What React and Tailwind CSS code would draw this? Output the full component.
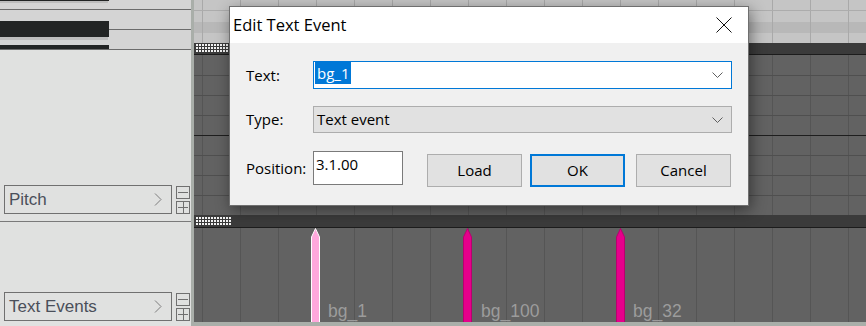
const VGRID_LIGHT =
  "bg-[repeating-linear-gradient(90deg,transparent_0_8px,#a9a9a9_8px_9px,transparent_9px_38px)]";
const VGRID_DARK =
  "bg-[repeating-linear-gradient(90deg,transparent_0_8px,#555555_8px_9px,transparent_9px_38px)]";

function Piano() {
  return (
    <svg width="191" height="50" className="block shrink-0">
      <rect width="191" height="50" fill="#d4d4d4" />
      <rect x="0" y="9" width="191" height="1" fill="#6b6b6b" />
      <rect x="109" y="29" width="82" height="1" fill="#6b6b6b" />
      <rect x="0" y="49" width="191" height="1" fill="#6b6b6b" />
      <rect x="0" y="1" width="108" height="2" fill="#bdbdbd" />
      <rect x="0" y="0" width="109" height="1" fill="#222424" />
      <rect x="0" y="37" width="108" height="3" fill="#bdbdbd" />
      <rect x="0" y="21" width="109" height="16" fill="#222424" />
      <rect x="0" y="45" width="109" height="4" fill="#222424" />
    </svg>
  );
}

function LaneControl({ label }) {
  return (
    <div className="flex items-start pl-[4px] gap-[4px]">
      <div className="w-[168px] h-[29px] border border-[#707070] flex items-center justify-between pl-[4px] pr-[9px]">
        <span className="text-[17px] leading-none text-[#4a4f5a]">{label}</span>
        <svg width="8" height="13" className="block">
          <polyline points="1,0.5 7,6.5 1,12.5" fill="none" stroke="#7d7d7d" strokeWidth="1" />
        </svg>
      </div>
      <div className="flex flex-col gap-[2px] mt-[1px]">
        <div className="w-[14px] h-[13px] border border-[#707070] relative">
          <svg width="12" height="11" className="block">
            <rect x="1" y="5" width="10" height="1" fill="#707070" />
          </svg>
        </div>
        <div className="w-[14px] h-[13px] border border-[#707070]">
          <svg width="12" height="11" className="block">
            <rect x="1" y="5" width="10" height="1" fill="#707070" />
            <rect x="6" y="0" width="1" height="11" fill="#707070" />
          </svg>
        </div>
      </div>
    </div>
  );
}

function LeftPanel() {
  return (
    <div className="w-[191px] shrink-0 flex flex-col bg-[#e0e1e0]">
      <Piano />
      <div className="h-[172px] border-b border-[#7a7a7a] flex flex-col justify-end pb-[7px]">
        <LaneControl label="Pitch" />
      </div>
      <div className="flex-1 flex flex-col justify-end pb-[5px]">
        <LaneControl label="Text Events" />
      </div>
    </div>
  );
}

function Grip() {
  const cols = Array.from({ length: 12 }, (_, i) => i);
  const rows = [0, 1, 2];
  return (
    <svg width="36" height="9" className="block">
      {rows.map((r) =>
        cols.map((c) => (
          <rect key={`${r}-${c}`} x={c * 3} y={r * 3} width="2" height="2" fill="#f2f2f2" />
        ))
      )}
    </svg>
  );
}

function Marker({ left, light }) {
  return (
    <svg width="11" height="96" className={`absolute top-0 block`} style={{ left }}>
      <polygon
        points="1.5,9 5.5,0.5 9.5,9 9.5,96 1.5,96"
        fill={light ? "#ffa8dc" : "#e6008b"}
        stroke={light ? "#ffffff" : "#b8006f"}
        strokeWidth="1"
      />
    </svg>
  );
}

function Canvas() {
  const rows = [0, 1, 2, 3, 4, 5, 6, 7];
  return (
    <div className="flex-1 flex flex-col min-w-0">
      <div className="h-[43px] flex flex-col">
        <div className={`h-[10px] bg-[#c5c5c5] ${VGRID_LIGHT}`} />
        <div className="h-[1px] bg-[#acacac]" />
        <div className={`h-[11px] bg-[#c5c5c5] ${VGRID_LIGHT}`} />
        <div className={`h-[11px] bg-[#b8b8b8] ${VGRID_LIGHT}`} />
        <div className={`h-[10px] bg-[#c5c5c5] ${VGRID_LIGHT}`} />
      </div>
      <div className="h-[12px] bg-[#3b3b3b] border-b border-[#1c1c1c] pl-[2px] pt-[1px]">
        <Grip />
      </div>
      <div className={`h-[160px] flex flex-col bg-[#626262] ${VGRID_DARK}`}>
        {rows.map((r) => (
          <div
            key={r}
            className={
              r === 0
                ? "h-[20px]"
                : r === 4
                ? "h-[20px] border-t border-[#1e1e1e]"
                : "h-[20px] border-t border-[#4f4f4f]"
            }
          />
        ))}
      </div>
      <div className="h-[13px] bg-[#3b3b3b] border-b border-[#1c1c1c] pl-[2px] pt-[2px]">
        <Grip />
      </div>
      <div className={`h-[94px] relative overflow-hidden bg-[#626262] ${VGRID_DARK}`}>
        <Marker left={116} light />
        <Marker left={268} />
        <Marker left={421} />
        <span className="absolute left-[134px] top-[75px] text-[17.5px] leading-[17px] text-[#9c9c9c]">bg_1</span>
        <span className="absolute left-[287px] top-[75px] text-[17.5px] leading-[17px] text-[#9c9c9c]">bg_100</span>
        <span className="absolute left-[439px] top-[75px] text-[17.5px] leading-[17px] text-[#9c9c9c]">bg_32</span>
      </div>
      <div className="flex-1 bg-[#a9aea9]" />
    </div>
  );
}

function Chevron() {
  return (
    <svg width="11" height="6" className="block">
      <polyline points="0.5,0.5 5.5,5.5 10.5,0.5" fill="none" stroke="#5f5f5f" strokeWidth="1" />
    </svg>
  );
}

function Dialog() {
  return (
    <div className="absolute left-[229px] top-[6px] w-[520px] h-[200px] border border-[#6f6f6f] bg-[#f0f0f0] shadow-[2px_4px_14px_rgba(0,0,0,0.45)] flex flex-col font-['Open_Sans',sans-serif] text-black">
      <div className="h-[36px] bg-white flex items-center justify-between pl-[3px] pr-[16px]">
        <span className="text-[16.5px] leading-none">Edit Text Event</span>
        <svg width="16" height="16" className="block">
          <line x1="0.5" y1="0.5" x2="15.5" y2="15.5" stroke="#111" strokeWidth="1" />
          <line x1="15.5" y1="0.5" x2="0.5" y2="15.5" stroke="#111" strokeWidth="1" />
        </svg>
      </div>
      <div className="flex-1 flex flex-col pl-[16px] pt-[18px] text-[15px]">
        <div className="flex items-center h-[28px]">
          <span className="w-[67px] leading-none">Text:</span>
          <div className="w-[419px] h-[28px] border border-[#0078d7] bg-white flex items-start justify-between pl-[1px] pr-[8px]">
            <span className="bg-[#0078d7] text-white px-[2px] h-[22px] leading-[22px]">bg_1</span>
            <div className="self-center">
              <Chevron />
            </div>
          </div>
        </div>
        <div className="flex items-center h-[27px] mt-[17px]">
          <span className="w-[67px] leading-none">Type:</span>
          <div className="w-[419px] h-[27px] border border-[#adadad] bg-[#e1e1e1] flex items-center justify-between pl-[3px] pr-[8px]">
            <span className="leading-none">Text event</span>
            <Chevron />
          </div>
        </div>
        <div className="flex items-start mt-[18px]">
          <span className="w-[67px] leading-none mt-[10px]">Position:</span>
          <div className="w-[90px] h-[34px] border border-[#7a7a7a] bg-white pl-[2px] pt-[3px] leading-[18px]">3.1.00</div>
          <button className="ml-[24px] mt-[3px] w-[95px] h-[33px] border border-[#adadad] bg-[#e1e1e1] leading-none">Load</button>
          <button className="ml-[8px] mt-[3px] w-[95px] h-[33px] border-2 border-[#0078d7] bg-[#e1e1e1] leading-none">OK</button>
          <button className="ml-[11px] mt-[3px] w-[95px] h-[33px] border border-[#adadad] bg-[#e1e1e1] leading-none">Cancel</button>
        </div>
      </div>
    </div>
  );
}

export default function App() {
  return (
    <div className="relative w-[866px] h-[326px] overflow-hidden flex bg-[#e0e1e0] font-['Liberation_Sans',Arial,sans-serif]">
      <LeftPanel />
      <div className="w-[3px] shrink-0 bg-[#a9aea9]" />
      <Canvas />
      <Dialog />
    </div>
  );
}
